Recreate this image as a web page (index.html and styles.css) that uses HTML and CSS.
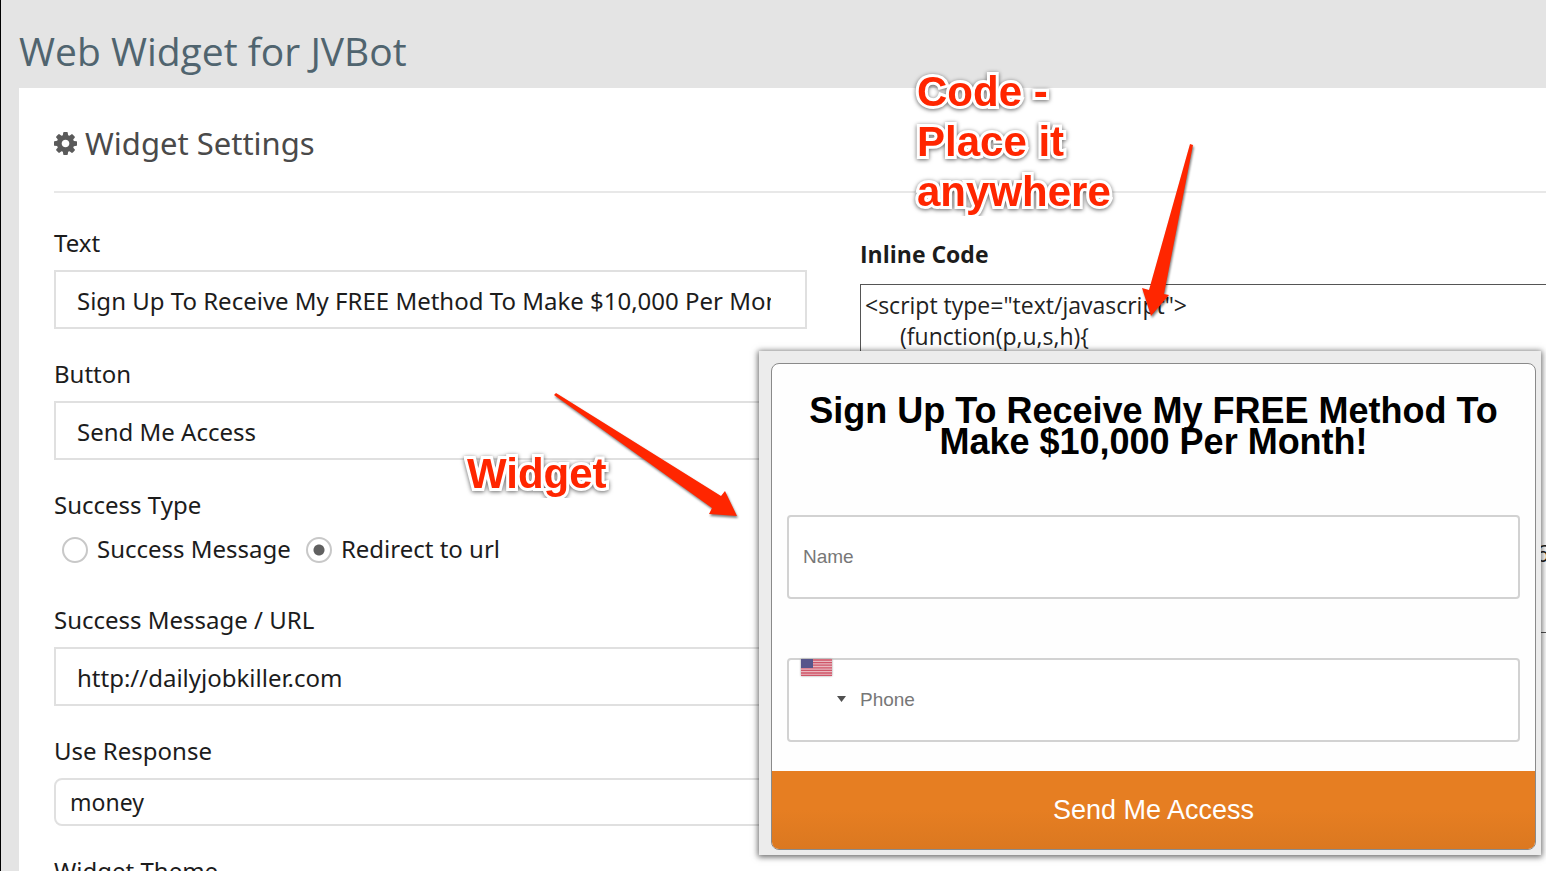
FILE: index.html
```html
<!DOCTYPE html>
<html lang="en">
<head>
<meta charset="utf-8">
<title>Web Widget for JVBot</title>
<link rel="stylesheet" href="styles.css">
</head>
<body>
<main class="page">
  <h1 class="page-title">Web Widget for JVBot</h1>
  <section class="card">
    <h2 class="card-title">
      <svg class="gear" viewBox="128 128 1536 1536" aria-hidden="true"><path d="M1152 896q0-106-75-181t-181-75-181 75-75 181 75 181 181 75 181-75 75-181zm512-109v222q0 12-8 23t-20 13l-185 28q-19 54-39 91 35 50 107 138 10 12 10 25t-9 23q-27 37-99 108t-94 71q-12 0-26-9l-138-108q-44 23-91 38-16 136-29 186-7 28-36 28h-222q-14 0-24.500-8.500t-11.500-21.500l-28-184q-49-16-90-37l-141 107q-10 9-25 9-14 0-25-11-126-114-165-168-7-10-7-23 0-12 8-23 15-21 51-66.500t54-70.500q-27-50-41-99l-183-27q-13-2-21-12.500t-8-23.500v-222q0-12 8-23t19-13l186-28q14-46 39-92-40-57-107-138-10-12-10-24 0-10 9-23 26-36 98.500-107.500t94.500-71.500q13 0 26 10l138 107q44-23 91-38 16-136 29-186 7-28 36-28h222q14 0 24.500 8.500t11.500 21.500l28 184q49 16 90 37l142-107q9-9 24-9 13 0 25 10 129 119 165 170 7 8 7 22 0 12-8 23-15 21-51 66.500t-54 70.500q26 50 41 98l183 28q13 2 21 12.500t8 23.500z"/></svg>
      Widget Settings
    </h2>
    <div class="columns">
      <form class="settings">
        <div class="field">
          <label class="label" for="text">Text</label>
          <input class="control" id="text" type="text" value="Sign Up To Receive My FREE Method To Make $10,000 Per Month!">
        </div>
        <div class="field">
          <label class="label" for="button">Button</label>
          <input class="control" id="button" type="text" value="Send Me Access">
        </div>
        <fieldset class="field">
          <legend class="label">Success Type</legend>
          <div class="radios">
            <label class="choice"><input class="radio" type="radio" name="type">Success Message</label>
            <label class="choice"><input class="radio" type="radio" name="type" checked>Redirect to url</label>
          </div>
        </fieldset>
        <div class="field">
          <label class="label" for="url">Success Message / URL</label>
          <input class="control" id="url" type="text" value="http://dailyjobkiller.com">
        </div>
        <div class="field">
          <label class="label" for="response">Use Response</label>
          <select class="control select" id="response"><option>money</option></select>
        </div>
        <div class="field">
          <label class="label" for="theme">Widget Theme</label>
          <select class="control select" id="theme"><option>Default</option></select>
        </div>
      </form>
      <div class="code">
        <label class="code-label" for="code">Inline Code</label>
        <textarea class="code-box" id="code" rows="11" wrap="off">&lt;script type="text/javascript"&gt;
	(function(p,u,s,h){






																			 6</textarea>
      </div>
    </div>
  </section>
</main>

<form class="widget">
  <div class="widget-card">
    <h3 class="widget-title">Sign Up To Receive My FREE Method To Make $10,000 Per Month!</h3>
    <div class="widget-fields">
      <input class="widget-input" type="text" placeholder="Name" aria-label="Name">
      <div class="phone">
        <input class="widget-input phone-input" type="tel" placeholder="Phone" aria-label="Phone">
        <button class="country" type="button" aria-label="United States">
          <svg class="flag" viewBox="0 0 31 17" aria-hidden="true">
            <rect width="31" height="17" fill="#e9b9c0"/>
            <path d="M0 1h31M0 3.600h31M0 6.200h31M0 8.800h31M0 11.400h31M0 14h31M0 16.500h31" stroke="#cf5568" stroke-width="1.300"/>
            <rect width="12" height="9" fill="#57568b"/>
          </svg>
          <svg class="caret" viewBox="0 0 9 6" aria-hidden="true"><path d="M0 0h9L4.500 6z" fill="#505050"/></svg>
        </button>
      </div>
    </div>
    <button class="submit" type="button">Send Me Access</button>
  </div>
</form>

<p class="note note-code">Code -<br>Place it<br>anywhere</p>
<p class="note note-widget">Widget</p>
<svg class="arrow arrow-code" viewBox="0 0 30 174" aria-hidden="true"><path d="M49 2L52 3L23 152L28 153L10 174L1 146L8 148Z"/></svg>
<svg class="arrow arrow-widget" viewBox="0 0 184 124" aria-hidden="true"><path d="M1 2L3 0L168 103L172 98L184 123L156 121L159 115L1 2Z"/></svg>
</body>
</html>
```

FILE: styles.css
```css
* { box-sizing: border-box; }

body {
  margin: 0;
  height: 100vh;
  overflow: hidden;
  position: relative;
  background: #e4e4e4;
  font-family: "Open Sans", sans-serif;
  font-size: 24px;
  color: #1c1c1c;
}

.page {
  height: 100%;
  overflow: hidden;
  border-left: 1px solid #000;
  padding: 24px 0 0 18px;
}

.page-title {
  margin: 0;
  height: 64px;
  font-size: 39px;
  line-height: 54px;
  font-weight: 400;
  color: #50646f;
}

.card {
  background: #fff;
  padding: 28px 0 0 35px;
}

.card-title {
  display: flex;
  align-items: center;
  gap: 8px;
  margin: 0;
  height: 77px;
  padding-bottom: 21px;
  border-bottom: 2px solid #e8e8e8;
  font-family: "Noto Sans", "Open Sans", sans-serif;
  font-size: 31px;
  font-weight: 400;
  color: #4a4a4a;
}

.gear { width: 23px; height: 23px; fill: #5a5a5a; }

.columns {
  display: grid;
  grid-template-columns: 753fr 686fr;
  column-gap: 53px;
  padding-top: 32px;
}

.settings {
  min-width: 0;
  font-family: "Noto Sans", "Open Sans", sans-serif;
}

.field {
  margin: 0 0 27px;
  padding: 0;
  border: 0;
}

.label {
  display: block;
  padding: 0;
  margin-bottom: 9px;
  line-height: 36px;
}

.control {
  display: block;
  width: 100%;
  height: 59px;
  padding: 2px 34px 0 21px;
  border: 2px solid #e0e0e0;
  background: #fff;
  font: inherit;
  color: inherit;
}

.select {
  appearance: none;
  height: 48px;
  padding: 0 14px;
  border-radius: 8px;
  font-size: 23px;
}

.radios {
  display: flex;
  gap: 15px;
  height: 43px;
  padding-left: 8px;
  line-height: 34px;
}

.choice { display: flex; align-items: flex-start; gap: 9px; }

.radio {
  appearance: none;
  width: 26px;
  height: 26px;
  margin: 5px 0 0;
  border: 2px solid #c8c8c8;
  border-radius: 50%;
  background: #fff;
}

.radio:checked {
  background: radial-gradient(circle, #606060 5px, #fff 6px);
}

.code { padding-top: 10px; }

.code-label {
  display: block;
  height: 49px;
  line-height: 38px;
  font-size: 23px;
  font-weight: 700;
}

.code-box {
  display: block;
  width: calc(100% + 20px);
  height: 349px;
  padding: 5px 4px;
  border: 1px solid #555;
  border-radius: 0;
  resize: none;
  overflow: hidden;
  background: #fff;
  font: 23px/31px "Open Sans", sans-serif;
  color: #222;
  tab-size: 35px;
}

.widget {
  position: absolute;
  top: 351px;
  left: 759px;
  right: 5px;
  padding: 12px 5px 5px 12px;
  background: #ececec;
  box-shadow: 0 1px 6px 1px rgba(0, 0, 0, 0.6);
  font-family: "Liberation Sans", Arial, sans-serif;
}

.widget-card {
  border: 1px solid #8a8a8a;
  border-radius: 8px;
  overflow: hidden;
  background: #fefefe;
}

.widget-title {
  margin: 0;
  padding: 31px 16px 58px;
  font-size: 36px;
  line-height: 31px;
  font-weight: 700;
  text-align: center;
  color: #000;
}

.widget-fields {
  display: grid;
  gap: 59px;
  padding: 0 15px 29px;
}

.widget-input {
  display: block;
  width: 100%;
  height: 84px;
  padding: 0 14px;
  border: 2px solid #d2d2d2;
  border-radius: 4px;
  background: #fff;
  font: 19px "Liberation Sans", Arial, sans-serif;
}

.widget-input::placeholder { color: #777; }

.phone { position: relative; }

.phone-input { padding-left: 71px; }

.country {
  position: absolute;
  top: 1px;
  left: 14px;
  display: flex;
  gap: 5px;
  padding: 0;
  border: 0;
  background: none;
}

.flag { width: 31px; height: 17px; box-shadow: 0 0 2px #999; }

.caret { width: 9px; height: 6px; margin-top: 37px; }

.submit {
  display: block;
  width: 100%;
  height: 78px;
  padding: 0;
  border: 0;
  background: linear-gradient(#e67e22 50%, #db7820);
  font: 27px "Liberation Sans", Arial, sans-serif;
  color: #fff;
}

.note {
  position: absolute;
  margin: 0;
  font: 700 42px/50px "Liberation Sans", Arial, sans-serif;
  color: #ff2600;
  -webkit-text-stroke: 6px #fff;
  paint-order: stroke fill;
  filter: drop-shadow(0 1px 2px rgba(0, 0, 0, 0.6));
  clip-path: inset(-10px -10px 1px -10px);
}

.note-code { top: 67px; left: 917px; }

.note-widget { top: 449px; left: 467px; }

.arrow {
  position: absolute;
  overflow: visible;
  fill: #ff2600;
  filter: drop-shadow(1px 2px 1px rgba(0, 0, 0, 0.5));
}

.arrow-code { top: 142px; left: 1141px; width: 30px; height: 174px; }

.arrow-widget { top: 393px; left: 553px; width: 184px; height: 124px; }
```
